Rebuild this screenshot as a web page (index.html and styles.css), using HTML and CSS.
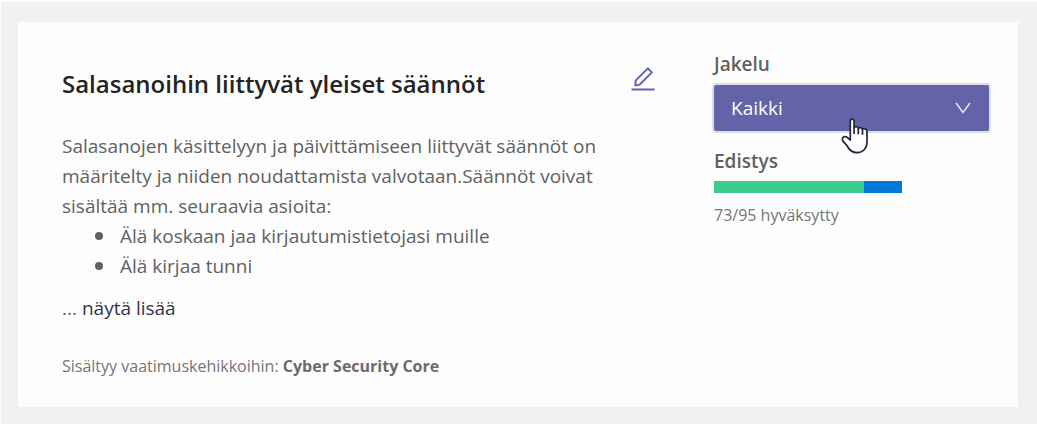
FILE: index.html
```html
<!DOCTYPE html>
<html lang="fi">
<head>
<meta charset="utf-8">
<meta name="viewport" content="width=device-width, initial-scale=1">
<title>Salasanoihin liittyvät yleiset säännöt</title>
<link rel="stylesheet" href="styles.css">
</head>
<body>
<main class="page">
  <article class="card">
    <section class="content">
      <header class="header">
        <h1 class="title">Salasanoihin liittyvät yleiset säännöt</h1>
        <button class="edit" type="button" aria-label="Muokkaa">
          <svg width="24" height="26" viewBox="0 0 24 26" fill="none" stroke="currentColor" stroke-width="2" aria-hidden="true">
            <path d="M4.2 19.3 L4.8 14.4 L16.9 2.4 L20.9 6.4 L9 18.2 Q7 19.6 4.2 19.3 Z" stroke-linejoin="round"/>
            <path d="M0.5 23.5 H23.5"/>
          </svg>
        </button>
      </header>
      <div class="description">
        <p class="text">Salasanojen käsittelyyn ja päivittämiseen liittyvät säännöt on määritelty ja niiden noudattamista valvotaan.Säännöt voivat sisältää mm. seuraavia asioita:</p>
        <ul class="list">
          <li class="item">Älä koskaan jaa kirjautumistietojasi muille</li>
          <li class="item">Älä kirjaa tunni</li>
        </ul>
      </div>
      <p class="more">... <a class="more-link" href="#">näytä lisää</a></p>
      <p class="frameworks">Sisältyy vaatimuskehikkoihin: <strong>Cyber Security Core</strong></p>
    </section>
    <aside class="side">
      <label class="label" for="audience">Jakelu</label>
      <div class="dropdown">
        <select class="select" id="audience">
          <option>Kaikki</option>
        </select>
        <svg class="chevron" width="16" height="12" viewBox="0 0 16 12" fill="none" stroke="#e6e6f4" stroke-width="1.5" aria-hidden="true">
          <path d="M1 1 L8 10.5 L15 1"/>
        </svg>
        <svg class="pointer" width="28" height="36" viewBox="0 0 28 36" aria-hidden="true">
          <path d="M9.3 22 V3.4 C9.3 0.4 13.1 0.4 13.1 3.4 V9.3 C14.3 8.4 16.4 8.5 17.3 10 C18.9 9.2 20.6 9.6 21.5 11 C23.6 10.2 26 11.2 26 13.4 V24 C26 30.5 21.8 34.6 16.2 34.6 C11.5 34.6 8.4 32.2 6.5 28.5 C5 25.6 1.6 24.2 1.3 21.3 C1.2 18.6 4.2 18 5.9 19.2 Z" fill="#fff" stroke="#23233a" stroke-width="1.7" stroke-linejoin="round"/>
          <path d="M13.1 8.5 V16 M17.3 9.8 V16.2 M21.5 10.8 V16.8" fill="none" stroke="#23233a" stroke-width="1.7"/>
        </svg>
      </div>
      <h2 class="label" id="progress-label">Edistys</h2>
      <div class="progress" role="img" aria-labelledby="progress-label progress-text">
        <span class="accepted" style="width: 80%"></span>
      </div>
      <p class="progress-text" id="progress-text">73/95 hyväksytty</p>
    </aside>
  </article>
</main>
</body>
</html>
```
FILE: styles.css
```css
* { box-sizing: border-box; }

body {
  margin: 0;
  background: #f2f1f0;
  color: #616161;
  font-family: "Open Sans", "Noto Sans", sans-serif;
  font-size: 19px;
  line-height: 30px;
}

h1, h2, p, ul { margin: 0; padding: 0; }

.page {
  min-height: 100vh;
  padding: 20px 19px 17px 17px;
  border: solid #fff;
  border-width: 2px 0 0 1px;
}

.card {
  display: grid;
  grid-template-columns: minmax(0, 1fr) 275px;
  column-gap: 59px;
  padding: 27px 29px 26px 44px;
  background: #fdfdfd;
}

.header {
  display: flex;
  align-items: flex-start;
  justify-content: space-between;
  padding-top: 15px;
}

.title {
  color: #242424;
  font-size: 24px;
  font-weight: 600;
  line-height: 40px;
}

.edit {
  display: flex;
  padding: 2px 0;
  border: 0;
  background: none;
  color: #6264a7;
  cursor: pointer;
}

.description {
  padding: 27px 44px 0 0;
}

.list {
  padding-left: 33px;
  list-style: none;
}

.item {
  display: flex;
  align-items: center;
  gap: 17px;
}

.item::before {
  width: 8px;
  height: 8px;
  border-radius: 50%;
  background: #616161;
  content: "";
}

.more { padding-top: 12px; }

.more-link {
  color: #33344a;
  text-decoration: none;
}

.frameworks {
  padding-top: 28px;
  color: #757575;
  font-size: 16px;
}

.frameworks strong {
  color: #6b6b6b;
  font-weight: 700;
}

.label {
  display: block;
  font-size: 19px;
  font-weight: 600;
  line-height: 30px;
}

.dropdown {
  position: relative;
  margin: 6px 0 15px;
}

.select {
  display: block;
  width: 100%;
  height: 46px;
  padding: 0 17px;
  border: 0;
  border-radius: 2px;
  outline: 0;
  box-shadow: 0 0 0 2px #dddcea;
  background: #6264a7;
  color: #fff;
  font: 500 19px/30px "Open Sans", "Noto Sans", sans-serif;
  appearance: none;
  cursor: pointer;
}

.chevron {
  position: absolute;
  top: 17px;
  right: 18px;
  pointer-events: none;
}

.pointer {
  position: absolute;
  top: 33px;
  left: 127px;
  pointer-events: none;
}

.progress {
  width: 188px;
  height: 12px;
  margin: 5px 0 7px;
  background: #0078d7;
}

.accepted {
  display: block;
  height: 100%;
  background: #3dcb8b;
}

.progress-text {
  color: #757575;
  font-size: 16px;
}
```
